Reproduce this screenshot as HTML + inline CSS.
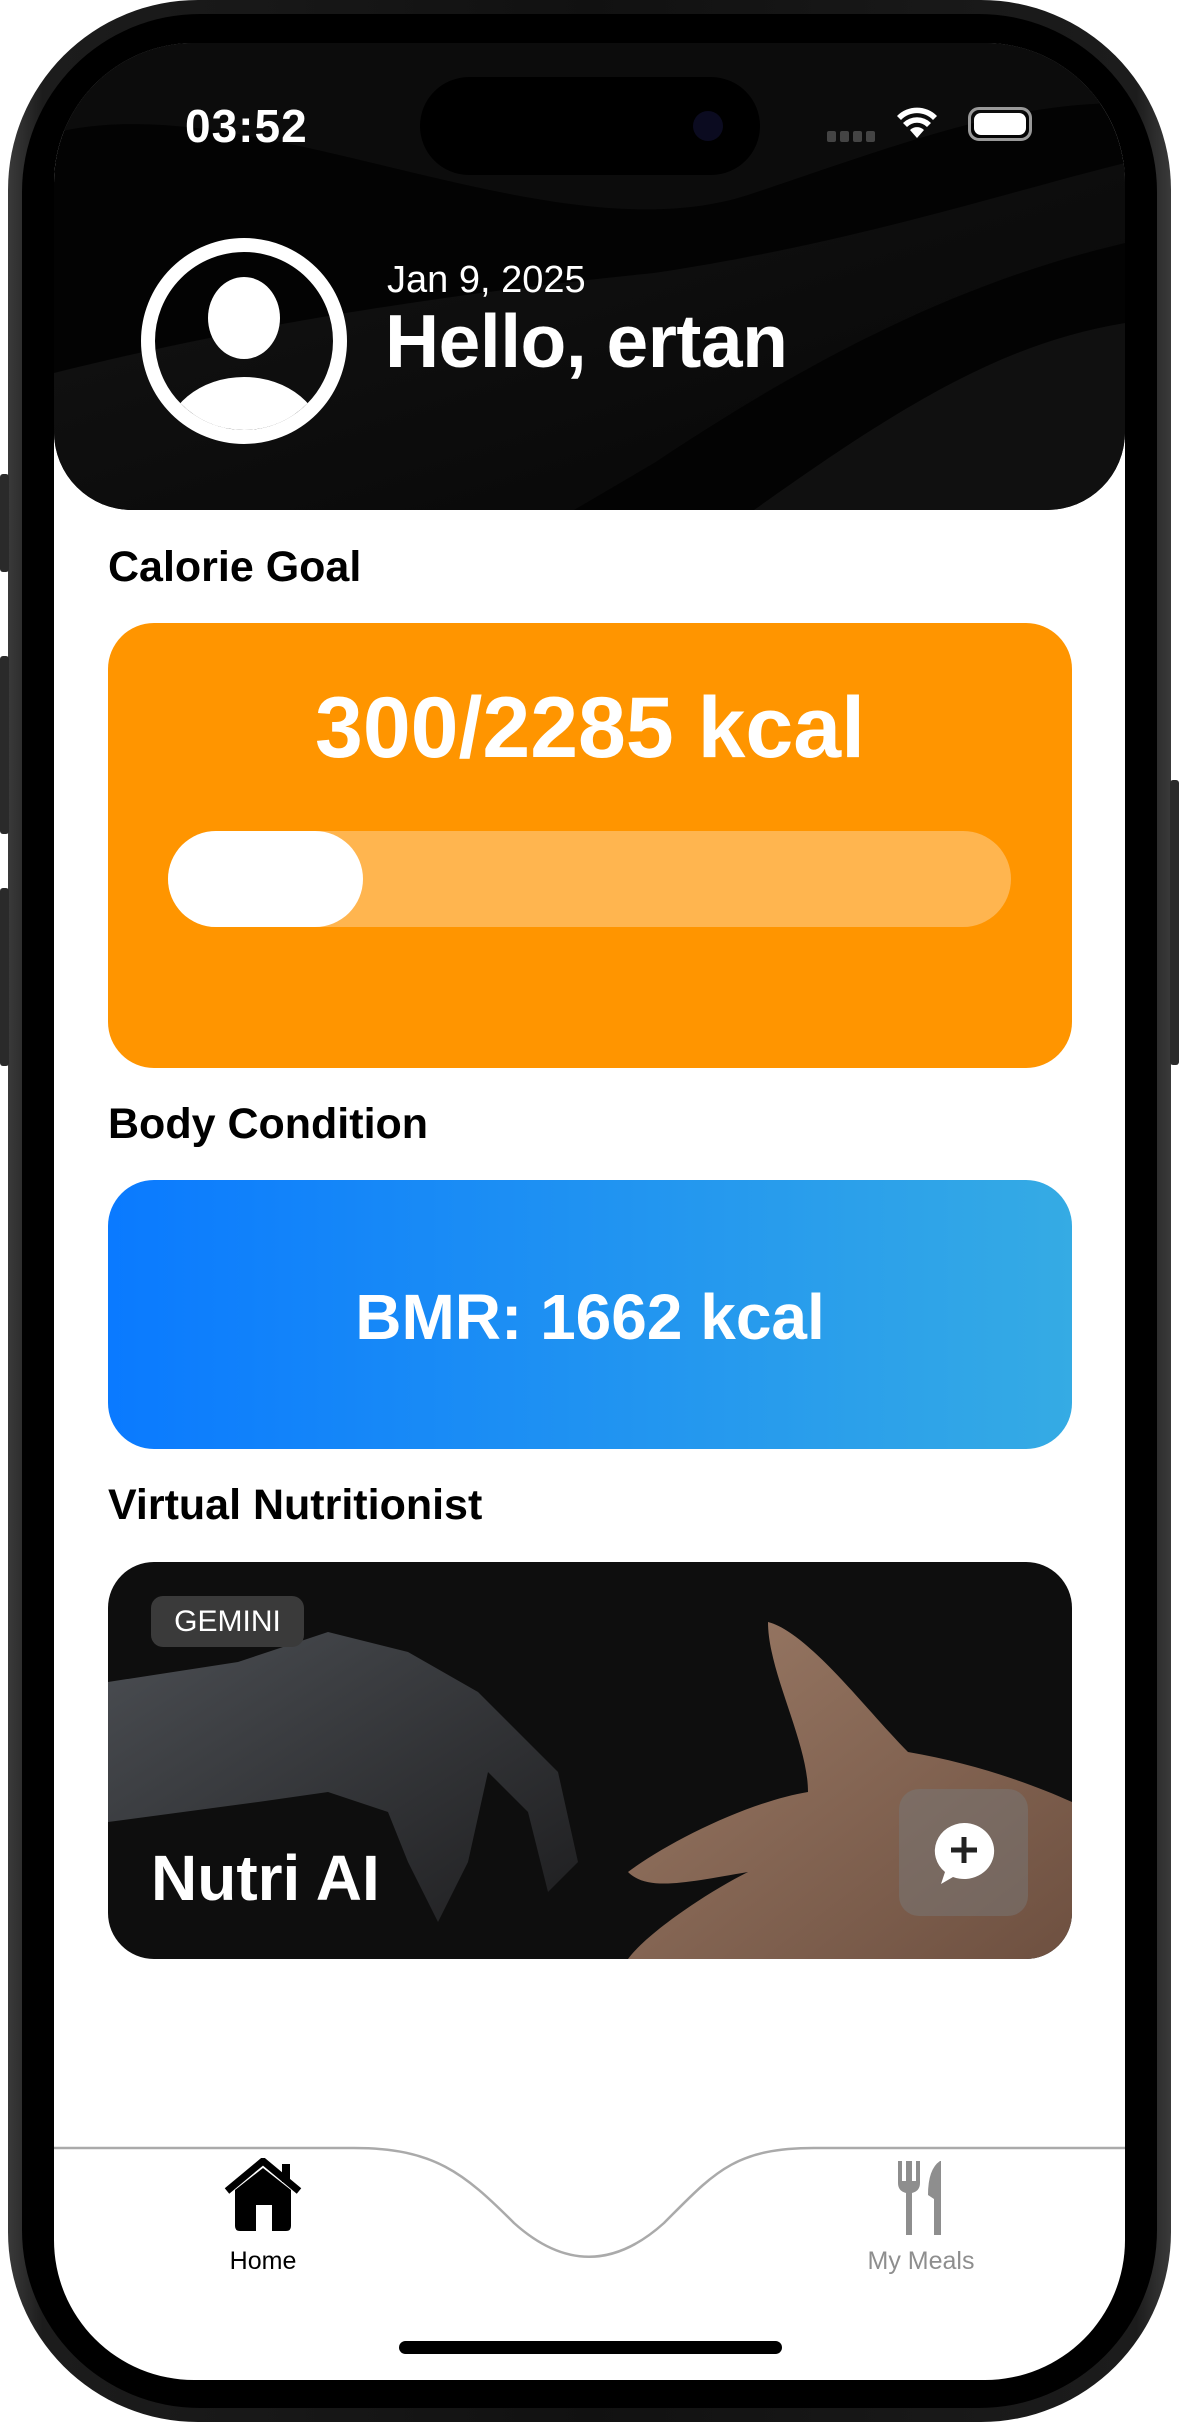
<!DOCTYPE html>
<html><head><meta charset="utf-8">
<style>
*{margin:0;padding:0;box-sizing:border-box}
html,body{width:1179px;height:2422px;background:#fff;overflow:hidden;font-family:"Liberation Sans",sans-serif}
.abs{position:absolute}
.phone{left:8px;top:0;width:1163px;height:2422px;border-radius:190px;background:linear-gradient(90deg,#3a3a3a,#1c1c1c 3%,#111 50%,#1c1c1c 97%,#3a3a3a);}
.bezel{left:22px;top:14px;width:1135px;height:2394px;border-radius:178px;background:#000}
.screen{left:54px;top:43px;width:1071px;height:2337px;border-radius:140px;background:#fff;overflow:hidden}
.hdr{left:0;top:0;width:1071px;height:467px;border-radius:0 0 78px 78px;background:#030303;overflow:hidden}
.t{color:#fff;position:absolute;white-space:nowrap}
.lbl{position:absolute;left:54px;font-weight:bold;font-size:43px;color:#000}
</style></head><body>
<div class="abs phone"></div>
<div class="abs" style="left:0;top:474px;width:9px;height:98px;background:#2a2a2a;border-radius:3px"></div>
<div class="abs" style="left:0;top:656px;width:9px;height:178px;background:#2a2a2a;border-radius:3px"></div>
<div class="abs" style="left:0;top:888px;width:9px;height:178px;background:#2a2a2a;border-radius:3px"></div>
<div class="abs" style="left:1170px;top:780px;width:9px;height:285px;background:#2a2a2a;border-radius:3px"></div>
<div class="abs bezel"></div>
<div class="abs screen">
  <div class="abs hdr">
    <svg class="abs" style="left:0;top:0" width="1071" height="467">
      <defs><linearGradient id="g1" x1="0" y1="0" x2="1" y2="1"><stop offset="0" stop-color="#141414"/><stop offset="1" stop-color="#060606"/></linearGradient></defs>
      <path d="M0 90 C200 40 500 220 700 150 C850 100 950 60 1071 60 L1071 0 L0 0Z" fill="#0c0c0c"/>
      <path d="M0 330 C200 280 400 250 600 230 C800 200 950 150 1071 120 L1071 200 C900 240 750 320 600 420 L520 467 L0 467Z" fill="url(#g1)"/>
      <path d="M700 467 C850 360 950 300 1071 280 L1071 467Z" fill="#101010"/>
    </svg>
    <div class="t" style="left:131px;top:56px;font-size:46px;font-weight:bold;letter-spacing:1px">03:52</div>
    <div class="abs" style="left:366px;top:34px;width:340px;height:98px;border-radius:49px;background:#000"></div>
    <div class="abs" style="left:639px;top:68px;width:30px;height:30px;border-radius:50%;background:#0b0b20"></div>
    <div class="abs" style="left:773px;top:88px;width:50px;height:12px;display:flex;gap:4px"><i style="width:9px;height:11px;background:#444;border-radius:2px"></i><i style="width:9px;height:11px;background:#444;border-radius:2px"></i><i style="width:9px;height:11px;background:#444;border-radius:2px"></i><i style="width:9px;height:11px;background:#444;border-radius:2px"></i></div>
    <svg class="abs" style="left:843px;top:62px" width="40" height="34" viewBox="0 0 40 34"><path d="M20 33 L13 25 A10 10 0 0 1 27 25Z M6 18 A20 20 0 0 1 34 18 L30 22 A14 14 0 0 0 10 22Z M0 11 A28 28 0 0 1 40 11 L36 15 A22 22 0 0 0 4 15Z" fill="#fff"/></svg>
    <div class="abs" style="left:914px;top:64px;width:64px;height:34px;border:3px solid #999;border-radius:11px;padding:3px"><div style="width:100%;height:100%;background:#fff;border-radius:7px"></div></div>
    <svg class="abs" style="left:87px;top:195px" width="206" height="206" viewBox="0 0 206 206">
      <defs><clipPath id="c"><circle cx="103" cy="103" r="89"/></clipPath></defs>
      <circle cx="103" cy="103" r="96" fill="none" stroke="#fff" stroke-width="14"/>
      <ellipse cx="103" cy="80" rx="36" ry="41" fill="#fff"/>
      <ellipse cx="103" cy="205" rx="80" ry="66" fill="#fff" clip-path="url(#c)"/>
    </svg>
    <div class="t" style="left:333px;top:216px;font-size:38px">Jan 9, 2025</div>
    <div class="t" style="left:331px;top:255px;font-size:75px;font-weight:bold;letter-spacing:-0.5px">Hello, ertan</div>
  </div>
  <div class="lbl" style="top:500px">Calorie Goal</div>
  <div class="abs" style="left:54px;top:580px;width:964px;height:445px;border-radius:46px;background:#FF9500"></div>
  <div class="t" style="left:54px;width:964px;text-align:center;top:636px;font-size:86px;font-weight:bold">300/2285 kcal</div>
  <div class="abs" style="left:114px;top:788px;width:843px;height:96px;border-radius:48px;background:#FFB54F"></div>
  <div class="abs" style="left:114px;top:788px;width:195px;height:96px;border-radius:48px;background:#fff"></div>
  <div class="lbl" style="top:1057px">Body Condition</div>
  <div class="abs" style="left:54px;top:1137px;width:964px;height:269px;border-radius:46px;background:linear-gradient(90deg,#0A7AFF,#35ABE4)"></div>
  <div class="t" style="left:54px;width:964px;text-align:center;top:1237px;font-size:64px;font-weight:bold">BMR: 1662 kcal</div>
  <div class="lbl" style="top:1438px">Virtual Nutritionist</div>
  <div class="abs" style="left:54px;top:1519px;width:964px;height:397px;border-radius:46px;background:#0e0e0e;overflow:hidden">
    <svg class="abs" style="left:0;top:0" width="964" height="397">
      <defs><linearGradient id="sk" x1="0" y1="0" x2="1" y2="1"><stop offset="0" stop-color="#9a7a66"/><stop offset="1" stop-color="#6e5040"/></linearGradient>
      <linearGradient id="mt" x1="0" y1="0" x2="1" y2="1"><stop offset="0" stop-color="#5a5e64"/><stop offset="1" stop-color="#222224"/></linearGradient></defs>
      <path d="M0 120 L130 100 L220 70 L300 90 L370 130 L450 210 L470 300 L440 330 L420 250 L380 210 L360 300 L330 360 L300 300 L280 250 L220 230 L150 240 L0 260Z" fill="url(#mt)" opacity=".8"/>
      <path d="M660 60 C700 70 760 150 800 190 C860 200 920 220 964 240 L964 397 L520 397 C540 370 600 330 640 310 C580 320 540 330 520 310 C560 280 640 240 700 230 C700 180 660 110 660 60Z" fill="url(#sk)"/>
    </svg>
    <div class="abs" style="left:43px;top:34px;width:153px;height:51px;border-radius:12px;background:#3a3a3a;color:#fff;font-size:30px;text-align:center;line-height:51px">GEMINI</div>
    <div class="t" style="left:43px;top:279px;font-size:64px;font-weight:bold">Nutri AI</div>
    <div class="abs" style="left:791px;top:227px;width:129px;height:127px;border-radius:20px;background:rgba(120,120,120,.5)"></div>
    <svg class="abs" style="left:823px;top:258px" width="66" height="66" viewBox="0 0 66 66"><path d="M33 3 A30 28 0 1 1 22 57 L10 64 L14 52 A30 28 0 0 1 33 3Z" fill="#fff"/><path d="M33 17 V43 M20 30 H46" stroke="#222" stroke-width="5"/></svg>
  </div>
  <svg class="abs" style="left:0;top:2100px" width="1071" height="180"><path d="M0 5 H300 C380 5 410 30 460 80 C510 125 560 125 610 80 C660 30 680 5 760 5 H1071" fill="none" stroke="#aaa" stroke-width="2.5"/></svg>
  <svg class="abs" style="left:170px;top:2115px" width="78" height="74" viewBox="0 0 78 74"><path d="M3 33 L39 3 L75 33" fill="none" stroke="#000" stroke-width="7"/><rect x="58" y="6" width="8" height="18" fill="#000"/><path d="M11 32 L39 10 L67 32 V68 Q67 73 62 73 H16 Q11 73 11 68Z" fill="#000"/><rect x="32" y="47" width="16" height="26" fill="#fff"/></svg>
  <div class="abs" style="left:159px;top:2204px;width:100px;text-align:center;font-size:25px;color:#000">Home</div>
  <svg class="abs" style="left:842px;top:2118px" width="50" height="74" viewBox="0 0 50 74"><path d="M2 0 V22 Q2 30 10 32 V74 H16 V32 Q24 30 24 22 V0 H20 V20 H16 V0 H10 V20 H6 V0Z" fill="#8e8e8e"/><path d="M44 0 Q32 8 32 34 L38 38 V74 H45 V0Z" fill="#8e8e8e"/></svg>
  <div class="abs" style="left:800px;top:2204px;width:134px;text-align:center;font-size:25px;color:#8e8e8e">My Meals</div>
  <div class="abs" style="left:345px;top:2298px;width:383px;height:13px;border-radius:7px;background:#000"></div>
</div>
</body></html>
